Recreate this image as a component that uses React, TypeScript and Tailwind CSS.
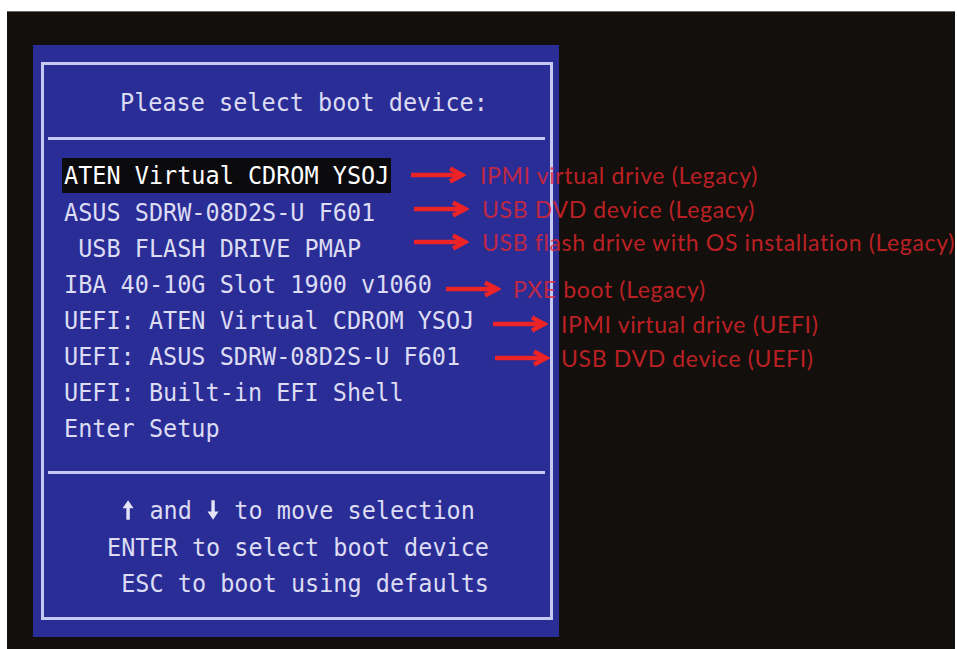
import React from "react";

type Note = { pos: string; gap: string; label: string };

const items = [
  "ATEN Virtual CDROM YSOJ",
  "ASUS SDRW-08D2S-U F601",
  " USB FLASH DRIVE PMAP",
  "IBA 40-10G Slot 1900 v1060",
  "UEFI: ATEN Virtual CDROM YSOJ",
  "UEFI: ASUS SDRW-08D2S-U F601",
  "UEFI: Built-in EFI Shell",
  "Enter Setup",
];

// annotation layer drawn over the screenshot
const notes: Note[] = [
  { pos: "left-[403px] top-[148px]", gap: "gap-[14px]", label: "IPMI virtual drive (Legacy)" },
  { pos: "left-[406px] top-[182px]", gap: "gap-[13px]", label: "USB DVD device (Legacy)" },
  { pos: "left-[406px] top-[215px]", gap: "gap-[13px]", label: "USB flash drive with OS installation (Legacy)" },
  { pos: "left-[438px] top-[262px]", gap: "gap-[12px]", label: "PXE boot (Legacy)" },
  { pos: "left-[485px] top-[297px]", gap: "gap-[13px]", label: "IPMI virtual drive (UEFI)" },
  { pos: "left-[487px] top-[331px]", gap: "gap-[11px]", label: "USB DVD device (UEFI)" },
];

const mono = "font-['DejaVu_Sans_Mono','Liberation_Mono',monospace] text-[23.5px] text-[#dcdcf3] whitespace-pre";

function Key({ down }: { down?: boolean }) {
  return (
    <svg width="14.15" height="20" viewBox="0 0 14 20" className={`inline-block align-[-2px] ${down ? "rotate-180" : ""}`}>
      <path d="M1.5 8.5L7 1L12.5 8.5Z" fill="#e4e4f6" />
      <rect x="5.3" y="7" width="3.4" height="12" fill="#e4e4f6" />
    </svg>
  );
}

function Line({ children }: { children: React.ReactNode }) {
  return <span className="inline-block scale-y-108">{children}</span>;
}

export default function App() {
  return (
    <div className="min-h-screen bg-white pl-[7px] pt-[11px]">
      <div className="relative h-[638px] w-[948px] border-t border-[#6b6b6b] bg-[#120f0c] pl-[26px] pt-[33px]">
        <div className="h-[592px] w-[526px] bg-[#2b2d97] pb-[17px] pl-[8px] pr-[6px] pt-[17px]">
          <div className="flex h-[558px] flex-col border-[3px] border-[#c6c8ef]">
            <div className={`flex h-[72px] items-center pl-[76px] pt-[4px] ${mono}`}>
              <Line>Please select boot device:</Line>
            </div>
            <div className="ml-[4px] mr-[5px] h-[3px] bg-[#c6c8ef]" />

            <div className={`h-[331px] pt-[19px] ${mono}`}>
              {items.map((t, i) => (
                <div key={i} className="flex h-[36px] items-start pl-[18px]">
                  <span className={`flex h-[35px] items-center px-[2px] ${i === 0 ? "-mt-[1px] bg-[#0b0a0c] text-white" : ""}`}>
                    <Line>{t}</Line>
                  </span>
                </div>
              ))}
            </div>

            <div className="ml-[4px] mr-[5px] h-[3px] bg-[#c6c8ef]" />
            <div className={`pl-[63px] pt-[18px] leading-[36.5px] ${mono}`}>
              <div>
                <Line>
                  {" "}
                  <Key /> and <Key down /> to move selection
                </Line>
              </div>
              <div>
                <Line>ENTER to select boot device</Line>
              </div>
              <div>
                <Line> ESC to boot using defaults</Line>
              </div>
            </div>
          </div>
        </div>

        {notes.map((n) => (
          <div key={n.label} className={`absolute flex h-[30px] items-center ${n.pos} ${n.gap}`}>
            <svg width="56" height="18" viewBox="0 0 56 18" className="shrink-0">
              <path d="M1 9H50" stroke="#ec2327" strokeWidth="4.5" />
              <path d="M40 2.5L52 9L40 15.5" fill="none" stroke="#ec2327" strokeWidth="4.5" strokeLinejoin="miter" />
            </svg>
            <span className="whitespace-nowrap font-['Lato','Open_Sans',sans-serif] text-[23px] leading-none tracking-[0.65px] text-[#e8262b]/80">
              {n.label}
            </span>
          </div>
        ))}
      </div>
    </div>
  );
}
